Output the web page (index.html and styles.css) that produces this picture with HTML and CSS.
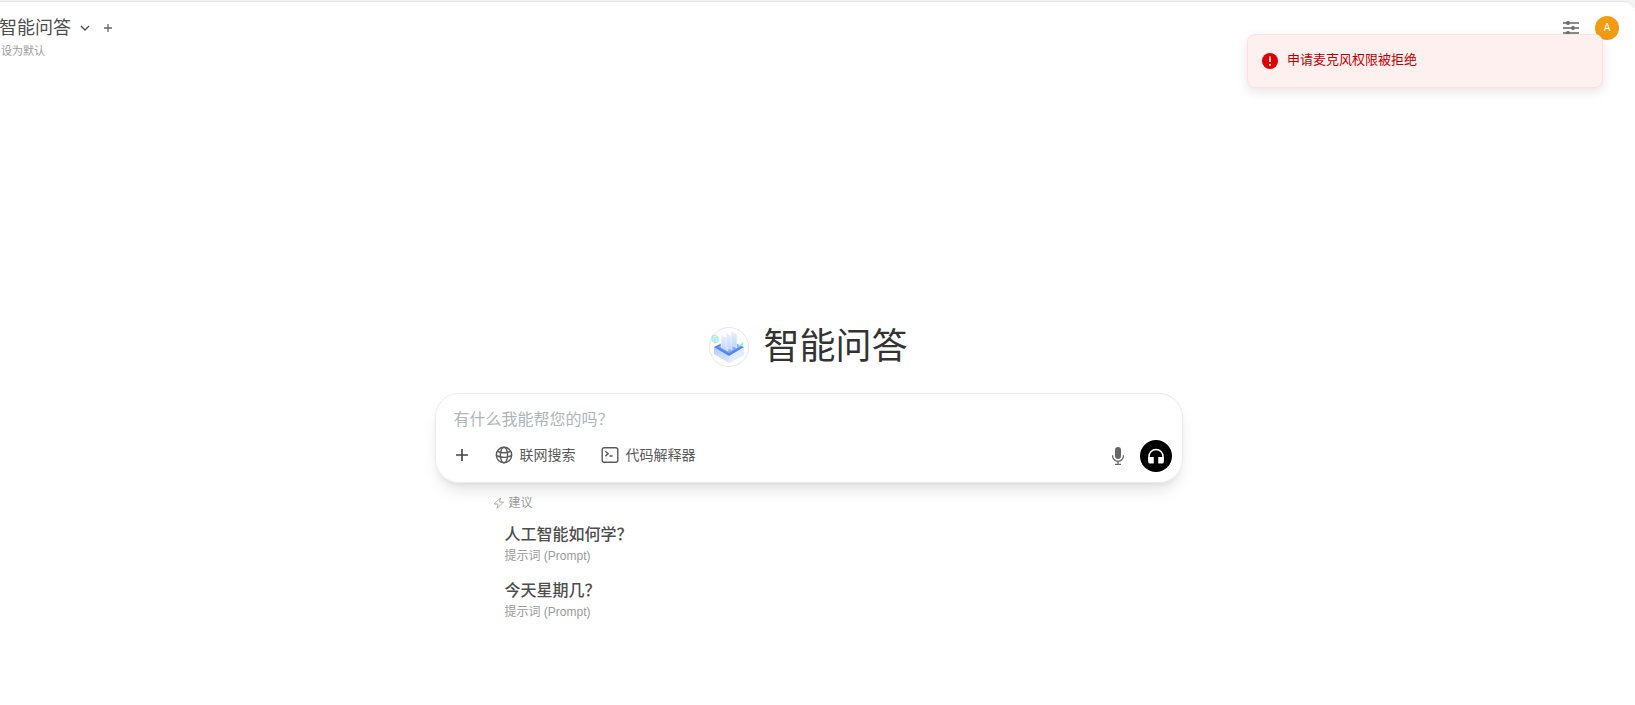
FILE: index.html
```html
<!DOCTYPE html>
<html lang="zh-CN">
<head>
    <meta charset="UTF-8">
    <title>智能问答</title>
    <link rel="stylesheet" href="styles.css">
</head>
<body>
    <div class="app">
        <header class="navbar">
            <div class="model-selector">
                <div class="model-row">
                    <button class="model-name" type="button">
                        智能问答
                        <svg width="12" height="12" viewBox="0 0 12 12" fill="none" stroke="currentColor" stroke-width="1.4"><path d="M2 4l4 4 4-4"/></svg>
                    </button>
                    <button class="icon-btn" type="button" aria-label="添加模型">
                        <svg width="10" height="10" viewBox="0 0 10 10" fill="none" stroke="currentColor" stroke-width="1.3"><path d="M5 1v8M1 5h8"/></svg>
                    </button>
                </div>
                <button class="set-default" type="button">设为默认</button>
            </div>
            <div class="nav-actions">
                <button class="icon-btn" type="button" aria-label="对话设置">
                    <svg width="18" height="18" viewBox="0 0 18 18" fill="none" stroke="currentColor" stroke-width="1.7"><path d="M1 4h3M8 4h9M1 9h8M13 9h4M1 14h3M8 14h9"/><circle cx="6" cy="4" r="1.2"/><circle cx="11" cy="9" r="1.2"/><circle cx="6" cy="14" r="1.2"/></svg>
                </button>
                <button class="avatar" type="button">A</button>
            </div>
        </header>

        <div class="toast" role="alert">
            <svg width="16" height="16" viewBox="0 0 16 16"><circle cx="8" cy="8" r="8" fill="#e00000"/><path d="M8 3.5v5.500M8 10.900v1.800" stroke="#ffefef" stroke-width="1.7"/></svg>
            <span>申请麦克风权限被拒绝</span>
        </div>

        <main class="chat">
            <div class="hero">
                <svg class="logo" width="40" height="40" viewBox="0 0 40 40">
                    <defs>
                        <linearGradient id="base" x1="0" y1="0" x2="1" y2="1">
                            <stop offset="0" stop-color="#b4ccff"/>
                            <stop offset="1" stop-color="#eaf1ff"/>
                        </linearGradient>
                        <linearGradient id="sheet" x1="0" y1="0" x2="0" y2="1">
                            <stop offset="0" stop-color="#e8f2ff"/>
                            <stop offset="1" stop-color="#bfd4fd"/>
                        </linearGradient>
                    </defs>
                    <circle cx="20" cy="20" r="19.5" fill="#fff" stroke="#e6e6e6"/>
                    <path d="M5 20v7l15 9 15-8v-8z" fill="url(#base)"/>
                    <path d="M20 29v7l15-8v-8z" fill="#e3ecff"/>
                    <path d="M5 20l14-7 16 7-15 9z" fill="#5584f3"/>
                    <path d="M9 20l10-5 12 5-11 6z" fill="#86adf9"/>
                    <path d="M12 8l7 3v13l-7-4z" fill="url(#sheet)" stroke="#fff" stroke-width=".5"/>
                    <path d="M17 6l6 3v14l-6-3z" fill="url(#sheet)" stroke="#fff" stroke-width=".5"/>
                    <path d="M22 4l6 3v14l-6-3z" fill="url(#sheet)" stroke="#fff" stroke-width=".5"/>
                    <path d="M3 9l3-1 3 2v5l-3 1-3-2zM3 9l3 2 3-1M6 11v5" fill="#c8f8ed" stroke="#88e5d4" stroke-width=".7"/>
                    <path d="M29 17l2 1 3-3v3l-3 2-2-1z" fill="#87edda"/>
                </svg>
                <h1>智能问答</h1>
            </div>

            <form class="composer">
                <input class="prompt" type="text" placeholder="有什么我能帮您的吗？" aria-label="消息">
                <div class="toolbar">
                    <div class="tools">
                        <button class="tool" type="button" aria-label="更多">
                            <svg width="16" height="16" viewBox="0 0 16 16" fill="none" stroke="#444" stroke-width="1.6"><path d="M8 2v12M2 8h12"/></svg>
                        </button>
                        <button class="tool" type="button">
                            <svg width="18" height="18" viewBox="0 0 18 18" fill="none" stroke="currentColor" stroke-width="1.4"><circle cx="9" cy="9" r="7.7"/><ellipse cx="9" cy="9" rx="3.6" ry="7.7"/><path d="M2.5 5.3Q9 8.2 15.5 5.3M1.3 9.5Q9 13.2 16.7 9.5"/></svg>
                            联网搜索
                        </button>
                        <button class="tool" type="button">
                            <svg width="18" height="18" viewBox="0 0 18 18" fill="none" stroke="currentColor" stroke-width="1.4"><rect x="1.2" y="1.7" width="15.6" height="14.6" rx="2"/><path d="M4.3 5.3l2.8 2.4-2.8 2.4M8.5 10h3.2"/></svg>
                            代码解释器
                        </button>
                    </div>
                    <div class="voice">
                        <button class="icon-btn" type="button" aria-label="语音输入">
                            <svg width="20" height="20" viewBox="0 0 20 20"><rect x="7" y="1" width="6" height="12" rx="3" fill="currentColor"/><path d="M4.6 9.3v.7a5.4 5.4 0 0 0 10.8 0v-.7M10 15.5v2.8M7 18.3h6" fill="none" stroke="currentColor" stroke-width="1.3"/></svg>
                        </button>
                        <button class="call" type="button" aria-label="语音通话">
                            <svg width="20" height="20" viewBox="0 0 20 20"><path d="M3 15v-4.500a7 7 0 0 1 14 0v4.500" fill="none" stroke="#fff" stroke-width="1.500"/><path d="M2.250 11h5.500v6.500h-4a1.500 1.500 0 0 1-1.500-1.500zM12.250 11h5.500v5a1.500 1.500 0 0 1-1.500 1.500h-4z" fill="#fff"/></svg>
                        </button>
                    </div>
                </div>
            </form>

            <section class="suggestions">
                <div class="suggestions-title">
                    <svg width="12" height="12" viewBox="0 0 12 12" fill="none" stroke="currentColor" stroke-width=".8" stroke-linejoin="round"><path d="M7.500 1L1 7h4l-1 4.500L10.500 5h-4z"/></svg>
                    建议
                </div>
                <button class="suggestion" type="button">
                    <span class="question">人工智能如何学？</span>
                    <span class="hint">提示词 (Prompt)</span>
                </button>
                <button class="suggestion" type="button">
                    <span class="question">今天星期几？</span>
                    <span class="hint">提示词 (Prompt)</span>
                </button>
            </section>
        </main>
    </div>
</body>
</html>
```

FILE: styles.css
```css
* {
    box-sizing: border-box;
}
body {
    margin: 0;
    background: #f3f3f3;
    color: #4e4e4e;
    font-family: "Liberation Sans", "Noto Sans CJK SC", sans-serif;
    font-size: 14px;
    overflow: hidden;
}
button,
input {
    font: inherit;
    color: inherit;
    background: none;
    border: none;
    padding: 0;
}
button {
    cursor: pointer;
}
svg {
    display: block;
    flex-shrink: 0;
}
.app {
    min-height: calc(100vh - 1px);
    margin-top: 1px;
    background: white;
    border-top: 1px solid #e5e5e5;
    border-radius: 0 12px 0 0;
}

/* top bar */
.navbar {
    display: flex;
    justify-content: space-between;
    align-items: flex-start;
    height: 64px;
    padding: 14px 16px 0 0;
}
/* the bar slides slightly under the left window edge */
.model-selector {
    margin-left: -1px;
}
.model-row {
    display: flex;
    align-items: center;
    gap: 12px;
    height: 24px;
}
.model-name {
    display: flex;
    align-items: center;
    gap: 8px;
    font-size: 18px;
    line-height: 24px;
}
.icon-btn {
    color: #666;
}
.set-default {
    display: block;
    margin: 3px 0 0 2px;
    font-size: 11px;
    line-height: 16px;
    color: #9b9b9b;
}
.nav-actions {
    display: flex;
    align-items: center;
    gap: 15px;
}
.avatar {
    width: 24px;
    height: 24px;
    border-radius: 50%;
    background: #f39c12;
    color: white;
    font-size: 10px;
    line-height: 24px;
}

.toast {
    position: absolute;
    top: 34px;
    right: 32px;
    display: flex;
    align-items: center;
    gap: 9px;
    width: 356px;
    height: 54px;
    padding: 0 14px;
    background: #fff0f0;
    border: 1px solid #ffe0e1;
    border-radius: 8px;
    box-shadow: 0 4px 12px rgba(0, 0, 0, 0.1);
    color: #c00000;
    font-size: 13px;
    line-height: 18px;
}
.toast span {
    padding-bottom: 3px;
}

/* chat area */
.chat {
    display: flex;
    flex-direction: column;
    align-items: center;
    padding: 257px 18px 0 0;
}
.hero {
    display: flex;
    align-items: center;
    gap: 14px;
    height: 48px;
    margin-bottom: 22px;
}
h1 {
    margin: 0;
    font-size: 36px;
    font-weight: 400;
    line-height: 48px;
    color: #333;
}
.composer {
    width: 100%;
    max-width: 748px;
    padding: 13px 10px 10px 18px;
    border: 1px solid #ebebeb;
    border-radius: 24px;
    box-shadow: 0 10px 15px -3px rgba(0, 0, 0, 0.1), 0 4px 6px -4px rgba(0, 0, 0, 0.1);
}
.prompt {
    display: block;
    width: 100%;
    height: 26px;
    font-size: 16px;
    outline: none;
}
.prompt::placeholder {
    color: #adb5bd;
    opacity: 1;
}
.toolbar {
    display: flex;
    align-items: flex-start;
    justify-content: space-between;
    margin-top: 7px;
}
.tools {
    display: flex;
    align-items: center;
    gap: 25px;
    height: 30px;
}
.tool {
    display: flex;
    align-items: center;
    gap: 7px;
    line-height: 20px;
    color: #5a5a5a;
}
.voice {
    display: flex;
    align-items: center;
    gap: 12px;
}
.call {
    display: grid;
    place-items: center;
    width: 32px;
    height: 32px;
    border-radius: 50%;
    background: black;
}

.suggestions {
    width: 100%;
    max-width: 632px;
    padding-top: 12px;
}
.suggestions-title {
    display: flex;
    align-items: center;
    gap: 4px;
    margin-bottom: 11px;
    font-size: 12px;
    line-height: 16px;
    color: #9b9b9b;
}
.suggestion {
    display: flex;
    flex-direction: column;
    width: 100%;
    margin-bottom: 14px;
    padding-left: 12px;
    text-align: left;
}
.question {
    font-size: 16px;
    font-weight: 500;
    line-height: 26px;
}
.hint {
    font-size: 12px;
    line-height: 16px;
    color: #9b9b9b;
}
```
